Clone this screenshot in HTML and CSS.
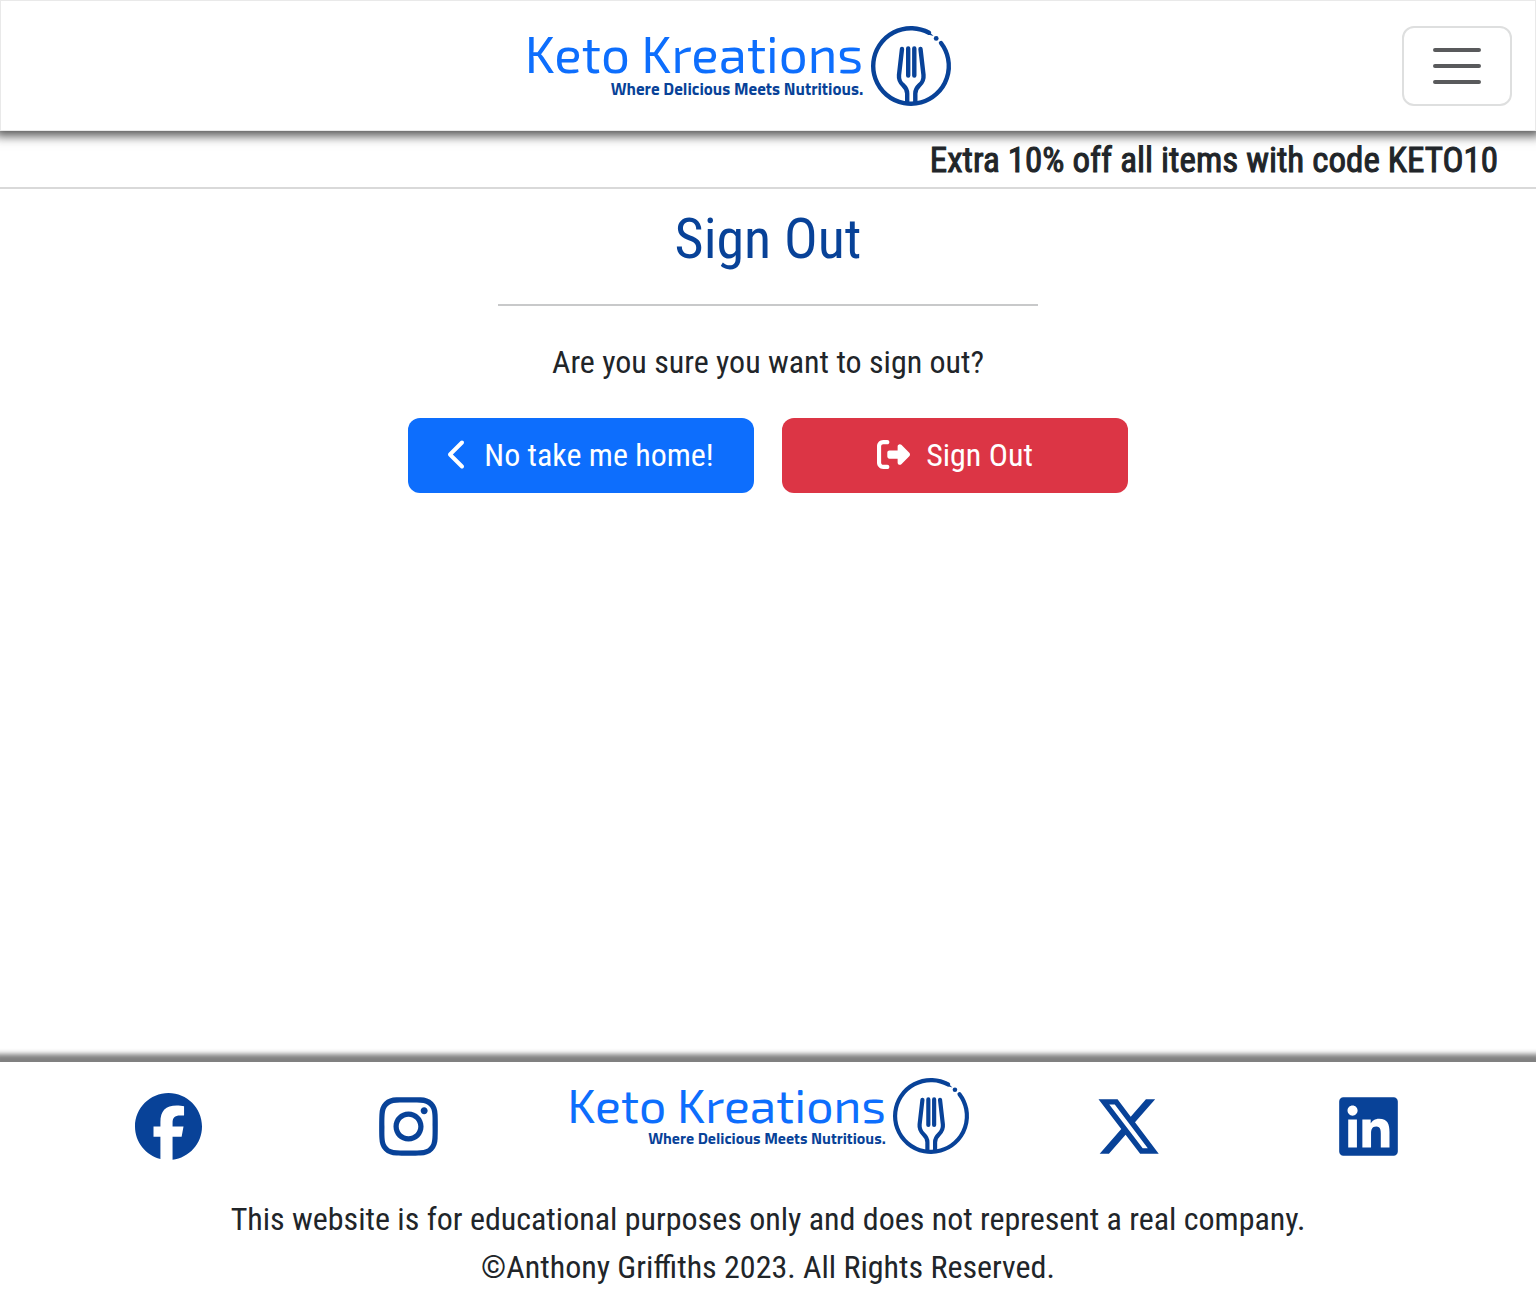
FILE: index.html
```html
<!DOCTYPE html>
<html lang="en">
<head>
<meta charset="utf-8">
<meta name="viewport" content="width=device-width, initial-scale=1">
<title>Keto Kreations - Sign Out</title>
<link rel="stylesheet" href="styles.css">
</head>
<body>
<svg class="sprite" aria-hidden="true">
  <symbol id="fork" viewBox="0 0 80 80" overflow="visible">
    <g fill="none" stroke="currentColor" stroke-width="4.4" stroke-linecap="round">
      <path d="M70 17A37.8 37.8 0 1 1 58 6.760" />
      <path d="M31 23 28 49c-1 11 8.200 9 8.200 18.500V76M49.500 23l3 26c1 11-8.200 9-8.200 18.500V76" stroke-linejoin="round" />
      <path d="M37.200 22.500v27M43.300 22.500v27" stroke-width="4.400" />
    </g>
    <path d="M56 3.500 62.500 10 57 8.500Z" fill="currentColor" />
    <circle cx="65.200" cy="12.400" r="2.400" fill="currentColor" />
  </symbol>
</svg>

<header class="site-header">
  <a class="logo logo-header" href="#">
    <span class="logo-words"><span class="logo-name">Keto Kreations</span><span class="logo-tagline">Where Delicious Meets Nutritious.</span></span>
    <svg class="logo-mark" aria-hidden="true"><use href="#fork" /></svg>
  </a>
  <button class="menu-toggle" type="button" aria-label="Toggle navigation">
    <svg viewBox="0 0 30 30" aria-hidden="true"><path stroke="currentColor" stroke-linecap="round" stroke-miterlimit="10" stroke-width="2" d="M4 7h22M4 15h22M4 23h22" /></svg>
  </button>
</header>
<p class="promo">Extra 10% off all items with code KETO10</p>

<main class="content">
  <h1>Sign Out</h1>
  <hr class="divider">
  <p class="question">Are you sure you want to sign out?</p>
  <div class="actions">
    <a class="btn btn-primary" href="#">
      <svg class="icon-chevron" viewBox="0 0 320 512" fill="currentColor" aria-hidden="true"><path d="M9.400 233.400c-12.500 12.500-12.500 32.800 0 45.300l192 192c12.500 12.500 32.800 12.500 45.300 0s12.500-32.800 0-45.300L77.300 256 246.600 86.600c12.500-12.500 12.500-32.800 0-45.300s-32.800-12.500-45.300 0l-192 192z" /></svg>
      <span>No take me home!</span>
    </a>
    <button class="btn btn-danger" type="button">
      <svg class="icon-exit" viewBox="0 0 512 512" fill="currentColor" aria-hidden="true"><path d="M377.900 105.900 500.700 228.700c7.200 7.200 11.300 17.100 11.300 27.300s-4.100 20.100-11.300 27.300L377.900 406.100c-6.400 6.400-15 9.900-24 9.900-18.700 0-33.900-15.200-33.900-33.900V320H192c-17.700 0-32-14.300-32-32v-64c0-17.700 14.300-32 32-32h128v-62.100c0-18.700 15.200-33.900 33.900-33.900 9 0 17.600 3.600 24 9.900zM160 96H96c-17.700 0-32 14.300-32 32v256c0 17.700 14.300 32 32 32h64c17.700 0 32 14.300 32 32s-14.300 32-32 32H96c-53 0-96-43-96-96V128c0-53 43-96 96-96h64c17.700 0 32 14.300 32 32s-14.300 32-32 32z" /></svg>
      <span>Sign Out</span>
    </button>
  </div>
</main>

<footer class="site-footer">
  <nav class="footer-links" aria-label="Social media">
    <a href="#" aria-label="Facebook"><svg class="social" viewBox="0 0 512 512" fill="currentColor"><path d="M512 256C512 114.600 397.400 0 256 0S0 114.600 0 256C0 376 82.700 476.800 194.200 504.500V334.200H141.400V256h52.800V222.300c0-87.100 39.400-127.500 125-127.500c16.200 0 44.200 3.200 55.700 6.400V172c-6-.6-16.500-1-29.600-1c-42 0-58.200 15.900-58.200 57.200V256h83.600l-14.400 78.200H287V510.100C413.800 494.800 512 386.900 512 256z" /></svg></a>
    <a href="#" aria-label="Instagram"><svg class="social" viewBox="-32 0 512 512" fill="currentColor"><path d="M224.100 141c-63.600 0-114.900 51.300-114.900 114.900s51.300 114.900 114.900 114.900S339 319.500 339 255.900 287.700 141 224.100 141zm0 189.600c-41.100 0-74.700-33.500-74.700-74.700s33.500-74.700 74.700-74.700 74.700 33.500 74.700 74.700-33.600 74.700-74.700 74.700zm146.400-194.300c0 14.900-12 26.800-26.800 26.800-14.900 0-26.800-12-26.800-26.800s12-26.800 26.800-26.800 26.800 12 26.800 26.800zm76.100 27.200c-1.700-35.900-9.900-67.700-36.200-93.900-26.200-26.200-58-34.400-93.900-36.200-37-2.100-147.900-2.100-184.900 0-35.800 1.700-67.600 9.900-93.900 36.100s-34.400 58-36.200 93.900c-2.100 37-2.100 147.900 0 184.900 1.700 35.900 9.900 67.700 36.200 93.900s58 34.400 93.900 36.200c37 2.100 147.900 2.100 184.900 0 35.900-1.700 67.700-9.900 93.900-36.200 26.200-26.200 34.400-58 36.200-93.900 2.100-37 2.100-147.800 0-184.800zM398.800 388c-7.800 19.600-22.900 34.700-42.600 42.600-29.500 11.700-99.500 9-132.100 9s-102.700 2.600-132.100-9c-19.600-7.800-34.700-22.900-42.600-42.600-11.700-29.500-9-99.500-9-132.100s-2.600-102.700 9-132.100c7.800-19.600 22.900-34.700 42.600-42.600 29.500-11.700 99.500-9 132.100-9s102.700-2.600 132.100 9c19.600 7.800 34.700 22.900 42.600 42.600 11.700 29.500 9 99.500 9 132.100s2.700 102.700-9 132.100z" /></svg></a>
    <a class="logo logo-footer" href="#">
      <span class="logo-words"><span class="logo-name">Keto Kreations</span><span class="logo-tagline">Where Delicious Meets Nutritious.</span></span>
      <svg class="logo-mark" aria-hidden="true"><use href="#fork" /></svg>
    </a>
    <a href="#" aria-label="X"><svg class="social" viewBox="0 0 512 512" fill="currentColor"><path d="M389.200 48h70.600L305.600 224.200 487 464H345L233.700 318.600 106.500 464H35.800L200.700 275.500 26.800 48H172.400L272.900 180.900 389.200 48zM364.400 421.800h39.100L151.100 88h-42L364.400 421.800z" /></svg></a>
    <a href="#" aria-label="LinkedIn"><svg class="social" viewBox="-32 0 512 512" fill="currentColor"><path d="M416 32H31.900C14.300 32 0 46.500 0 64.300v383.400C0 465.500 14.300 480 31.900 480H416c17.600 0 32-14.500 32-32.300V64.300c0-17.800-14.400-32.300-32-32.300zM135.400 416H69V202.200h66.500V416zm-33.200-243c-21.300 0-38.500-17.300-38.500-38.500S80.900 96 102.200 96c21.200 0 38.500 17.300 38.500 38.500 0 21.300-17.200 38.500-38.500 38.500zm282.100 243h-66.400V312c0-24.800-.5-56.700-34.500-56.700-34.600 0-39.900 27-39.900 54.900V416h-66.400V202.200h63.700v29.200h.9c8.900-16.800 30.600-34.500 62.900-34.500 67.200 0 79.700 44.300 79.700 101.900V416z" /></svg></a>
  </nav>
  <p class="legal">This website is for educational purposes only and does not represent a real company.</p>
  <p class="legal">©Anthony Griffiths 2023. All Rights Reserved.</p>
</footer>
</body>
</html>
```
FILE: styles.css
```css
:root {
  --navy: #084298;
  --blue: #0d6efd;
  --red: #dc3545;
  --ink: #212529;
}

* { box-sizing: border-box; }

body {
  display: flex;
  flex-direction: column;
  min-height: 100vh;
  margin: 0;
  color: var(--ink);
  background: #fff;
  font-family: "Roboto Condensed", "Liberation Sans Narrow", Roboto, sans-serif;
  font-size: 32px;
  line-height: 48px;
}

h1, p { margin: 0; }
svg { display: block; }
.sprite { position: absolute; width: 0; height: 0; }

.site-header {
  display: flex;
  align-items: center;
  justify-content: space-between;
  padding: 25px 23px 24px;
  border: 1px solid #e9e9e9;
  box-shadow: 0 0 10px 5px #555;
  background: #fff;
}

.logo {
  display: flex;
  justify-content: center;
  color: var(--navy);
  font-family: "Exo 2", "Titillium Web", "Noto Sans", sans-serif;
  text-decoration: none;
}
.logo-words {
  display: flex;
  flex-direction: column;
  align-items: flex-end;
  white-space: nowrap;
}
.logo-name { color: var(--blue); }
.logo-tagline { font-family: "Titillium Web", "Exo 2", Roboto, sans-serif; font-weight: 700; }
.logo-mark { overflow: visible; }

.logo-header { flex: 1; gap: 8px; padding-left: 50px; }
.logo-header .logo-name { font-size: 51px; line-height: 54px; }
.logo-header .logo-tagline { font-size: 17px; line-height: 18px; }
.logo-header .logo-mark { width: 80px; height: 80px; }

.logo-footer { gap: 7px; }
.logo-footer .logo-name { font-size: 48px; line-height: 52px; }
.logo-footer .logo-tagline { font-size: 16px; line-height: 16px; }
.logo-footer .logo-mark { width: 76px; height: 76px; }

.menu-toggle {
  display: flex;
  align-items: center;
  justify-content: center;
  width: 110px;
  height: 80px;
  padding: 0;
  border: 2px solid #dedfdf;
  border-radius: 12px;
  color: #595a5c;
  background: transparent;
}
.menu-toggle svg { width: 60px; height: 60px; }

.promo {
  padding: 6px 38px 2px;
  border-bottom: 2px solid #d9d9d9;
  font-size: 35px;
  text-align: right;
  -webkit-text-stroke: 1px currentColor;
}

.content {
  display: flex;
  flex: 1;
  flex-direction: column;
  width: 100%;
  max-width: 720px;
  margin: 0 auto;
  padding-top: 16px;
  text-align: center;
}
h1 {
  color: var(--navy);
  font-size: 56px;
  font-weight: 400;
  line-height: 68px;
}
.divider {
  width: 75%;
  height: 2px;
  margin: 31px auto 32px;
  border: 0;
  background: #c8c9ca;
}
.actions { display: flex; gap: 28px; margin-top: 32px; }
.btn {
  display: flex;
  flex: 1;
  align-items: center;
  justify-content: center;
  height: 75px;
  gap: 16px;
  padding: 0 12px 2px;
  border: 0;
  border-radius: 12px;
  color: #fff;
  font: inherit;
  text-decoration: none;
}
.btn-primary { background: var(--blue); }
.btn-danger { background: var(--red); }
.icon-chevron { width: 20px; height: 33px; }
.icon-exit { width: 33px; height: 33px; }

.site-footer {
  padding: 16px 48px 7px;
  box-shadow: 0 -3px 5px 5px #808080;
  text-align: center;
}
.footer-links {
  display: grid;
  grid-template-columns: 1fr 1fr 2fr 1fr 1fr;
  align-items: start;
  justify-items: center;
  height: 117px;
}
.footer-links > a { color: var(--navy); }
.social { width: 67px; height: 67px; margin-top: 15px; }
```
